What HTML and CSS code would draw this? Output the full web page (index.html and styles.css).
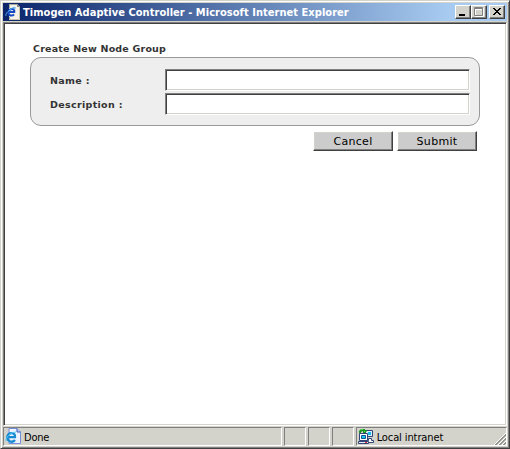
FILE: index.html
```html
<!DOCTYPE html>
<html lang="en">
<head>
<meta charset="utf-8">
<title>Timogen Adaptive Controller</title>
<link rel="stylesheet" href="styles.css">
</head>
<body>
<div class="window">
  <header class="titlebar">
    <svg class="page-icon" width="16" height="16" viewBox="0 0 16 16">
      <path d="M4 0h8l3 3v13H4z" fill="#f4f2e8"/>
      <path d="M4 .5h8M4.500 0v4M4.500 13v3" stroke="#aaa899" fill="none"/>
      <path d="M12 0v3h3z" fill="#8c8a80"/><path d="M14.500 3v12.500H4" stroke="#c8c4ac" fill="none"/>
      <path d="M9 10.300Q7.600 12 5.500 11.500Q3 10.700 3.600 7.800Q4.400 4.700 7.200 4.900Q9.800 5.500 9.300 8H4" fill="none" stroke="#1749c4" stroke-width="2"/>
      <path d="M4.500 7Q5 5.500 6.500 5" fill="none" stroke="#62c5ff"/>
      <path d="M1.500 12Q-.5 11 3 7.500Q7 3.300 9.800 3.200Q11 3.500 9.500 5.500" fill="none" stroke="#4ca8f4"/>
    </svg>
    <span class="title">Timogen Adaptive Controller - Microsoft Internet Explorer</span>
    <div class="controls">
      <span class="control"><svg width="16" height="14"><path d="M4 9h6v2H4z" fill="#000"/></svg></span>
      <span class="control"><svg width="16" height="14"><path d="M4.500 3.500h8v8h-8zM4 4.500h9" fill="none" stroke="#fff"/><path d="M3.500 2.500h8v8h-8zM3 3.500h9" fill="none" stroke="#808080"/></svg></span>
      <span class="control close"><svg width="16" height="14" shape-rendering="crispEdges"><path d="M4 3h2v1h1v1h2V4h1V3h2v1h-1v1h-1v1H9v1h1v1h1v1h1v1h-2V9H9V8H7v1H6v1H4V9h1V8h1V7h1V6H6V5H5V4H4z"/></svg></span>
    </div>
  </header>
  <main class="content">
    <h1 class="heading">Create New Node Group</h1>
    <form class="form">
      <div class="panel">
        <label class="row"><span class="label name">Name :</span><input class="field" type="text"></label>
        <label class="row"><span class="label desc">Description :</span><input class="field" type="text"></label>
      </div>
      <div class="actions">
        <button class="button" type="button"><span class="cancel">Cancel</span></button>
        <button class="button" type="button"><span class="submit">Submit</span></button>
      </div>
    </form>
  </main>
  <footer class="status">
    <div class="cell main">
      <svg class="status-icon" width="16" height="16" viewBox="0 0 16 16">
        <path d="M4 .5h8l3.500 3.500v11.500H4z" fill="#eef3ff" stroke="#7790d8"/>
        <path d="M12 .5V4h3.500" fill="#bdcdf6" stroke="#3457ba"/>
        <path d="M10 12Q8 14.500 5 13.500Q1.800 12 2.300 8.500Q3.500 5 6.500 5.200Q10.400 5.500 10 9.200H3" fill="none" stroke="#168bd2" stroke-width="2.300"/>
        <path d="M1 13Q0 11 3.500 7.500Q7 3.500 11 4" fill="none" stroke="#53c8f5"/>
      </svg>
      <span class="done">Done</span>
    </div>
    <div class="cell small"></div><div class="cell small"></div><div class="cell small"></div>
    <div class="cell zone">
      <svg class="status-icon" width="18" height="17" viewBox="0 0 18 17">
        <path d="M8.500 2.500h7v6h-7z" fill="#d8eef8" stroke="#347"/><path d="M11 4h3v3h-3z" fill="#16bde8"/>
        <path d="M11.500 10.500h3v2h2v2h-6v-2h1z" fill="#fff" stroke="#347"/>
        <path d="M2.500 5.500h8v7h-8z" fill="#fff" stroke="#347"/><path d="M4.500 7.500h4v3h-4z" fill="#18c8e8" stroke="#159"/>
        <path d="M1.500 13.500h10v2h-10z" fill="#e4edf7" stroke="#347"/><path d="M8 14h2v1H8z" fill="#d33"/>
        <path d="M2 3l2-2h4v1h2v1L8 5H6V3L4 4v1H2z" fill="#169421"/><path d="M4 1h2v1H4zM7 3h1v1H7z" fill="#58d64d"/>
      </svg>
      <span class="intranet">Local intranet</span>
      <svg class="grip" width="13" height="13"><path d="M1 13L13 1M5 13L13 5M9 13l4-4" stroke="#fff"/><path d="M2 13L13 2M3 13L13 3M6 13l7-7M7 13l6-6M10 13l3-3M11 13l2-2" stroke="#858580" stroke-width=".8"/></svg>
    </div>
  </footer>
</div>
</body>
</html>
```
FILE: styles.css
```css
* { box-sizing: border-box; }
body { margin: 0; overflow: hidden; }
.window {
  width: 510px; height: 449px; padding: 1px; display: flex; flex-direction: column;
  background: #d4d3cb; border: 1px solid; border-color: #d4d3cb #404040 #404040 #d4d3cb;
  box-shadow: inset 1px 1px #fff, inset -1px -1px #808080;
}
.titlebar {
  height: 18px; flex: none; margin: 1px 1px 1px; padding: 0 2px; display: flex; align-items: center;
  background: linear-gradient(90deg, #0a246a, #a6caf0 88%);
}
.page-icon { width: 16px; height: 16px; margin-right: 2px; flex: none; }
.title, .done, .intranet, .heading, .label, .button span { white-space: nowrap; }
.title { font: bold 11px/16px "DejaVu Sans Condensed", sans-serif; letter-spacing: .04px; color: #fff; padding-top: 1px; }
.controls { display: flex; margin-left: auto; }
.control {
  width: 16px; height: 14px; background: #d4d3cb; border: 1px solid;
  border-color: #fff #404040 #404040 #fff; box-shadow: inset -1px -1px #808080;
}
.control svg { display: block; margin: -1px; }
.close { margin-left: 2px; }
.content {
  height: 404px; flex: none; margin: 0 1px; padding: 18px 24px 0;
  background: #fff; border: 1px solid; border-color: #808080 #fff #fff #808080;
  box-shadow: inset 1px 1px #404040, inset -1px -1px #d4d3cb;
}
.heading { margin: 0 0 0 5px; height: 16px; font: bold 9.5px/15px "DejaVu Sans", sans-serif; letter-spacing: .2px; color: #333; }
.form { width: 450px; margin-left: 2px; }
.panel {
  height: 69px; padding: 11px 9px 0 19px; display: flex; flex-direction: column; gap: 2px;
  border: 1px solid #999; border-radius: 11px; background: #eee;
}
.row { display: flex; height: 22px; }
.label { width: 115px; font: bold 9.5px/23px "DejaVu Sans", sans-serif; letter-spacing: .33px; color: #333; }
.field {
  width: 305px; height: 22px; padding: 0; background: #fff; border: 1px solid;
  border-color: #808080 #fff #fff #808080; border-radius: 0;
  box-shadow: inset 1px 1px #404040, inset -1px -1px #d4d3cb;
}
.actions { display: flex; justify-content: flex-end; gap: 4px; padding: 5px 3px 0 0; }
.button {
  width: 80px; height: 20px; padding: 0; border: 1px solid; border-color: #fff #404040 #404040 #fff;
  background: #ccc; box-shadow: inset -1px -1px #808080, inset 1px 1px #d4d3cb;
  font: 11px/17px "DejaVu Sans", sans-serif; letter-spacing: .3px; color: #000;
}
.status { height: 20px; display: flex; gap: 2px; margin: 1px 1px 0; font: 11px/19px "DejaVu Sans Condensed", sans-serif; }
.cell { display: flex; border: 1px solid; border-color: #808080 #fff #fff #808080; height: 19px; }
.main { width: 280px; padding-left: 1px; }
.small { width: 22px; }
.zone { width: 152px; }
.status-icon { flex: none; margin-right: 2px; }
.done { letter-spacing: -.2px; margin-left: 1px; }
.intranet { letter-spacing: -.1px; }
.grip { margin: 4px 0 0 auto; flex: none; }
```
